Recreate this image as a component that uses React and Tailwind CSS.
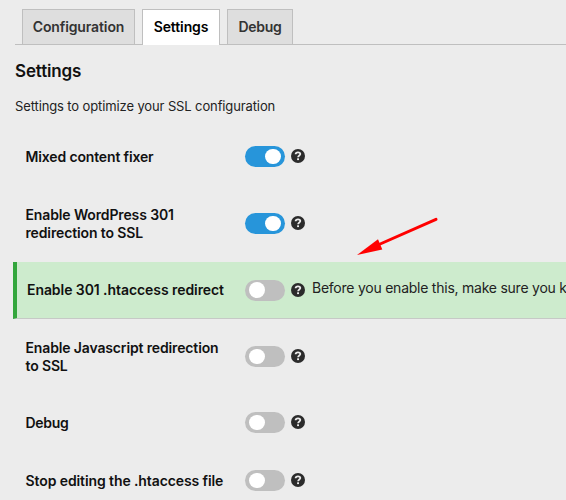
const tabs = [
  { label: 'Configuration', width: 'w-[113px]', tracking: 'tracking-[-0.12px]' },
  { label: 'Settings', width: 'w-[78px]', active: true, tracking: 'tracking-[-0.1px]' },
  { label: 'Debug', width: 'w-[66px]', tracking: 'tracking-[-0.25px]' },
];

const rows = [
  { lines: ['Mixed content fixer'], on: true, height: 'h-[57px]', tracking: 'tracking-[-0.15px]' },
  { lines: ['Enable WordPress 301', 'redirection to SSL'], on: true, height: 'h-[77px]', tracking: 'tracking-[-0.13px]' },
  {
    lines: ['Enable 301 .htaccess redirect'],
    height: 'h-[57px]',
    tracking: 'tracking-[-0.07px]',
    note: 'Before you enable this, make sure you k',
  },
  { lines: ['Enable Javascript redirection', 'to SSL'], height: 'h-[75px]', tracking: 'tracking-[-0.14px]' },
  { lines: ['Debug'], height: 'h-[57px]', tracking: 'tracking-[-0.3px]' },
  { lines: ['Stop editing the .htaccess file'], height: 'h-[59px]', tracking: 'tracking-[-0.1px]' },
];

function Toggle({ on }) {
  return (
    <span
      role="switch"
      aria-checked={!!on}
      className={`flex h-[21px] w-[39.5px] shrink-0 items-center rounded-full px-[4px] ${
        on ? 'justify-end bg-[#2795da]' : 'justify-start bg-[#bfbfbf]'
      }`}
    >
      <span className="size-[15.5px] rounded-full bg-white" />
    </span>
  );
}

function Help() {
  return (
    <svg viewBox="0 0 14 14" className="mb-px ml-[6.5px] size-[14px] shrink-0" aria-hidden="true">
      <circle cx="7" cy="7" r="7" fill="#2b2b2b" />
      <path d="M4.6 5.3C4.7 3.9 5.7 3.3 7 3.3C8.4 3.3 9.3 4 9.3 5.1C9.3 6.5 7.2 6.4 7.1 8.3" fill="none" stroke="#ececec" strokeWidth="1.8" />
      <rect x="6.1" y="9.3" width="1.9" height="1.8" fill="#ececec" />
    </svg>
  );
}

function Row({ lines, on, height, tracking, note }) {
  return (
    <div
      className={`flex shrink-0 items-center ${height} ${
        note
          ? 'ml-[13px] border-b border-l-4 border-b-[#c6c9c6] border-l-[#33a63c] bg-[#cdebcd] pl-[10px]'
          : 'pl-[25.5px]'
      }`}
    >
      <div className={`shrink-0 text-[14px] leading-[18px] font-semibold whitespace-nowrap text-[#111] ${tracking} ${note ? 'w-[218px]' : 'w-[219.5px]'}`}>
        {lines.map((line) => (
          <div key={line}>{line}</div>
        ))}
      </div>
      <Toggle on={on} />
      <Help />
      {note && <span className="ml-[7px] pb-[4px] text-[14px] leading-[18px] tracking-[-0.24px] whitespace-nowrap text-[#222]">{note}</span>}
    </div>
  );
}

export default function App() {
  return (
    <main className="relative flex h-[500px] w-[566px] flex-col overflow-hidden bg-[#ececec] font-['Inter','Liberation_Sans',sans-serif]">
      <nav className="ml-[15px] flex h-[45px] shrink-0 items-end gap-[7px] border-b border-[#bfbfbf] pl-[7px]">
        {tabs.map((tab) => (
          <div
            key={tab.label}
            className={`flex items-center justify-center border border-b-0 border-[#bfbfbf] text-[14px] font-semibold ${tab.width} ${tab.tracking} ${
              tab.active ? '-mb-px h-[36px] bg-white pb-[3px] text-black' : 'h-[35px] bg-[#dedede] pb-px text-[#333]'
            }`}
          >
            {tab.label}
          </div>
        ))}
      </nav>
      <h1 className="mt-[15px] ml-[15px] h-[22px] text-[17px] leading-[22px] font-semibold tracking-[-0.15px] text-[#111]">Settings</h1>
      <p className="mt-[15px] ml-[15px] h-[18px] text-[13px] leading-[18px] tracking-[-0.12px] text-[#222]">Settings to optimize your SSL configuration</p>
      <div className="mt-[13px] flex flex-col">
        {rows.map((row) => (
          <Row key={row.lines[0]} {...row} />
        ))}
      </div>
      <svg viewBox="0 0 90 45" className="absolute top-[213px] left-[352px] h-[45px] w-[90px]" aria-hidden="true">
        <path d="M27 31.5L84 6.3" stroke="#ff0000" strokeWidth="3" strokeLinecap="round" />
        <path d="M5 42L26 26.3L30.3 36.4Z" fill="#ff0000" />
      </svg>
    </main>
  );
}
